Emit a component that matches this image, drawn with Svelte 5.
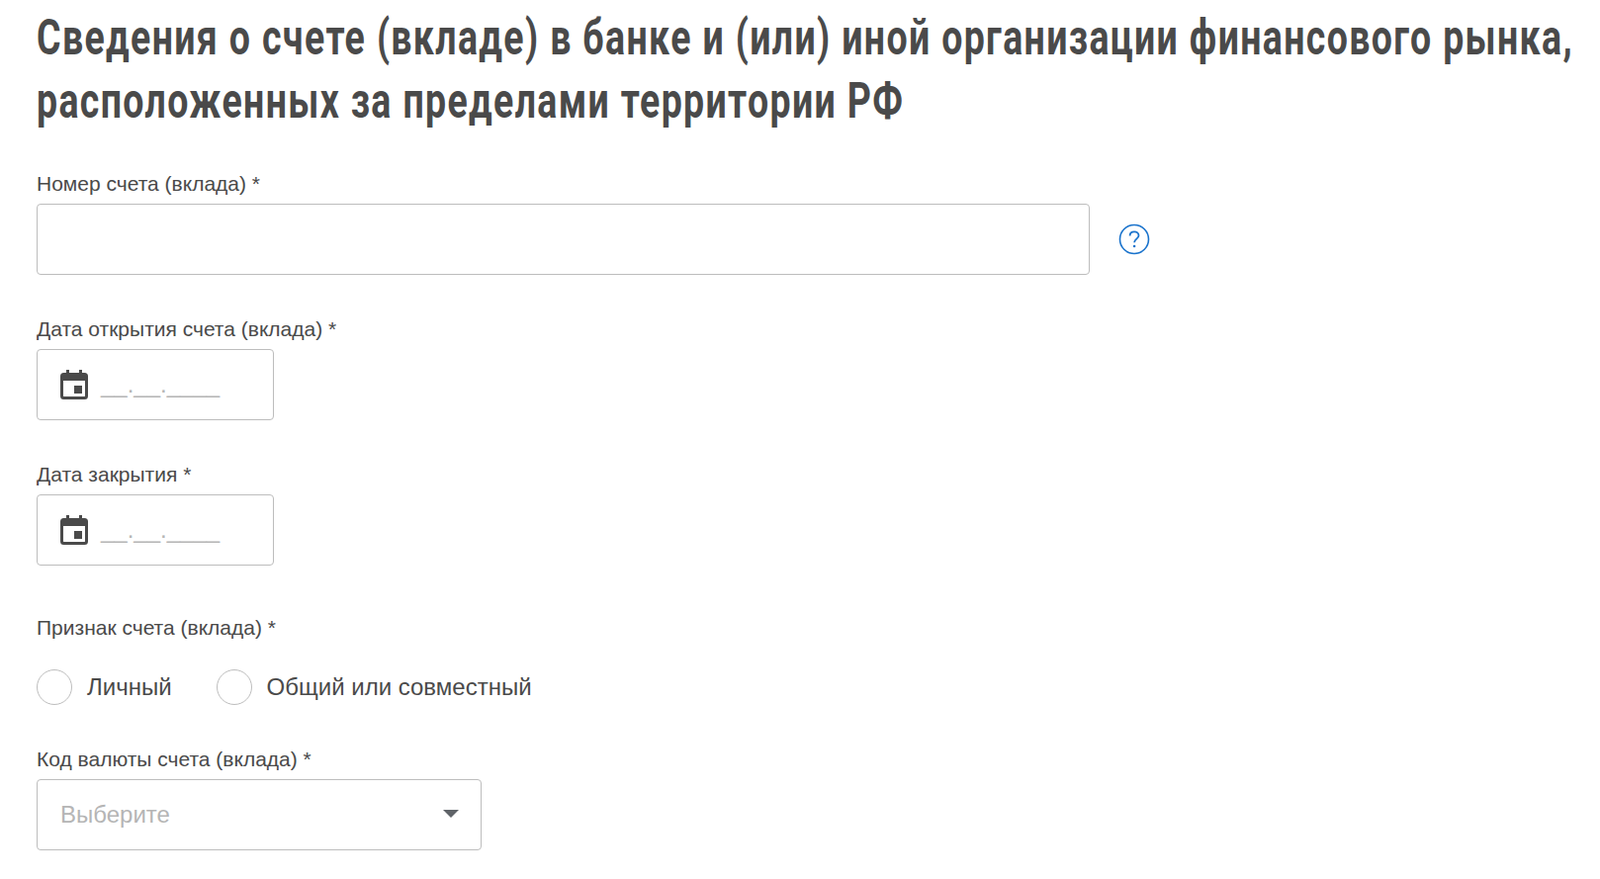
<script>
  const dateFields = ['Дата открытия счета (вклада) *', 'Дата закрытия *']
</script>

<div class="page">
  <h1>Сведения о счете (вкладе) в банке и (или) иной организации финансового рынка, расположенных за пределами территории РФ</h1>

  <div class="field first">
    <div class="label">Номер счета (вклада) *</div>
    <div class="row">
      <div class="input wide"></div>
      <svg class="help" width="32" height="32" viewBox="0 0 32 32" fill="none" stroke="#1a73cc">
        <circle cx="16" cy="16" r="14.5" stroke-width="1.6" />
        <path d="M11.6 12.6c0-2.6 2-4.2 4.5-4.2s4.400 1.600 4.400 3.800c0 3.300-4.400 3.500-4.400 7" stroke-width="1.800" />
        <circle cx="16.100" cy="23" r="1.300" fill="#1a73cc" stroke="none" />
      </svg>
    </div>
  </div>

  {#each dateFields as label}
    <div class="field date">
      <div class="label">{label}</div>
      <div class="input short">
        <svg class="cal" width="30" height="32" viewBox="0 0 30 32" fill="#4a4a4a">
          <path d="M7 1h3v3h10V1h3v3h2.500A3.500 3.500 0 0 1 29 7.500v20a3.500 3.500 0 0 1-3.500 3.500h-21A3.500 3.500 0 0 1 1 27.500v-20A3.500 3.500 0 0 1 4.500 4H7zM4 12v15.500c0 .3.200.5.500.5h21c.3 0 .5-.2.500-.5V12z" />
          <rect x="15" y="17" width="8" height="8" />
        </svg>
        <span class="mask">__.__.____</span>
      </div>
    </div>
  {/each}

  <div class="field sign">
    <div class="label">Признак счета (вклада) *</div>
    <div class="radios">
      <label class="radio"><span class="circle"></span>Личный</label>
      <label class="radio"><span class="circle"></span>Общий или совместный</label>
    </div>
  </div>

  <div class="field currency">
    <div class="label">Код валюты счета (вклада) *</div>
    <div class="input select">
      <span>Выберите</span>
      <i class="caret"></i>
    </div>
  </div>
</div>

<style>
  :global(body) {
    margin: 0;
    background: #fff;
  }

  .page {
    padding: 6px 0 0 37px;
    height: 883px;
    overflow: hidden;
    font-family: "Liberation Sans", Arial, sans-serif;
    color: #4a4a4a;
  }

  /* no condensed face installed, so the heading is squeezed horizontally */
  h1 {
    margin: 0;
    font-family: "Roboto", sans-serif;
    font-size: 50px;
    line-height: 64px;
    font-weight: 700;
    letter-spacing: 1.8px;
    color: #4a4a4a;
    width: 2110px;
    transform: scaleX(0.75);
    transform-origin: left top;
  }

  .label {
    font-size: 21px;
    line-height: 24px;
    margin-bottom: 8px;
  }

  .first { margin-top: 40px; }
  .date { margin-top: 43px; }
  .sign { margin-top: 51px; }
  .currency { margin-top: 43px; }

  .row {
    display: flex;
    align-items: center;
    gap: 29px;
  }

  .input {
    box-sizing: border-box;
    height: 72px;
    border: 1px solid #bdbdbd;
    border-radius: 4px;
    background: #fff;
  }

  .wide { width: 1065px; }

  .short {
    width: 240px;
    display: flex;
    align-items: center;
    padding-left: 22px;
  }

  .mask {
    margin-left: 12px;
    font-size: 24px;
    color: #b5b5b5;
  }

  .radios {
    display: flex;
    gap: 45px;
    margin-top: 30px;
  }

  .radio {
    display: flex;
    align-items: center;
    gap: 15px;
    font-size: 24px;
    line-height: 36px;
  }

  .circle {
    box-sizing: border-box;
    width: 36px;
    height: 36px;
    border: 1px solid #bdbdbd;
    border-radius: 50%;
  }

  .select {
    width: 450px;
    display: flex;
    align-items: center;
    justify-content: space-between;
    padding: 0 22px 0 23px;
    font-size: 24px;
    color: #b5b5b5;
  }

  .caret {
    width: 0;
    height: 0;
    border-left: 8px solid transparent;
    border-right: 8px solid transparent;
    border-top: 8px solid #5f6368;
    margin-top: -3px;
  }
</style>
